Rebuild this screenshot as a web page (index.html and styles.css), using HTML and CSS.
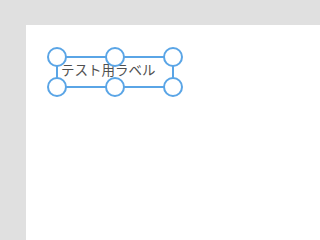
FILE: index.html
```html
<!DOCTYPE html>
<html lang="ja">
<head>
<meta charset="utf-8">
<link rel="stylesheet" href="styles.css">
</head>
<body>
<div class="canvas">
  <div class="label">
    <span class="text">テスト用ラベル</span>
    <span class="handle h-tl"></span>
    <span class="handle h-tm"></span>
    <span class="handle h-tr"></span>
    <span class="handle h-bl"></span>
    <span class="handle h-bm"></span>
    <span class="handle h-br"></span>
  </div>
</div>
</body>
</html>
```
FILE: styles.css
```css
html, body {
  margin: 0;
  padding: 0;
  height: 100%;
  background: #e0e0e0;
}
body {
  padding: 25px 0 0 26px;
  box-sizing: border-box;
  overflow: hidden;
}
.canvas {
  background: #ffffff;
  height: 100%;
  padding: 31px 0 0 30px;
  box-sizing: border-box;
}
.label {
  position: relative;
  width: 118px;
  height: 32px;
  box-sizing: border-box;
  border: 2px solid #5aa5e6;
  padding: 1px 0 0 3px;
}
.text {
  font-family: "Noto Sans CJK JP", sans-serif;
  font-size: 13.5px;
  line-height: 20px;
  color: #505050;
  display: block;
}
.handle {
  position: absolute;
  width: 20px;
  height: 20px;
  box-sizing: border-box;
  border: 2px solid #5aa5e6;
  border-radius: 50%;
  background: #ffffff;
}
.h-tl { left: -11px; top: -11px; }
.h-tm { left: 47px; top: -11px; }
.h-tr { right: -11px; top: -11px; }
.h-bl { left: -11px; bottom: -11px; }
.h-bm { left: 47px; bottom: -11px; }
.h-br { right: -11px; bottom: -11px; }
```
